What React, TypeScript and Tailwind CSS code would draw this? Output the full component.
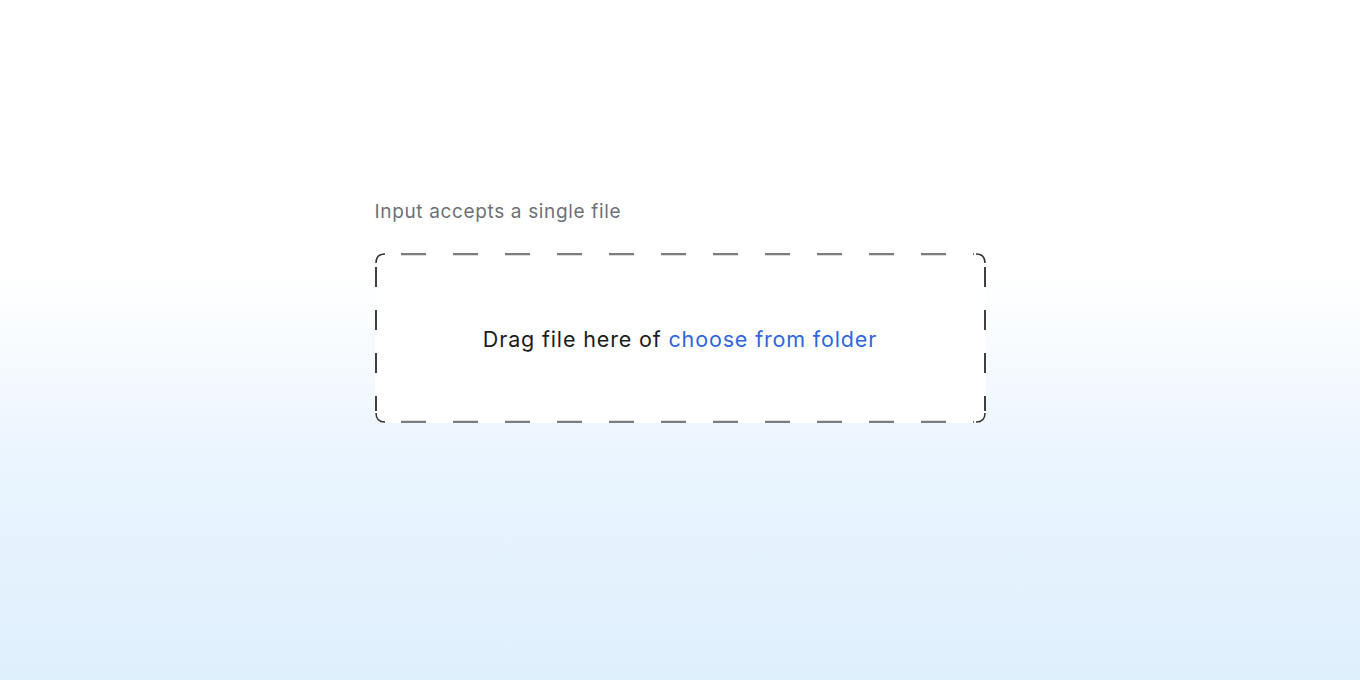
import React from "react";

const DropZone = () => {
  return (
    <div className="relative w-[611px] h-[170px] bg-white rounded-[12px] flex items-center justify-center">
      {/* dashed outline: long dashes need an svg, css dashed borders are too short */}
      <svg
        className="absolute inset-0 pointer-events-none"
        width="611"
        height="170"
        viewBox="0 0 611 170"
      >
        <line x1="12" y1="1" x2="599" y2="1" stroke="#7d7d7d" strokeWidth="2.4" strokeDasharray="25 27" strokeDashoffset="-14" />
        <line x1="12" y1="169" x2="599" y2="169" stroke="#7d7d7d" strokeWidth="2.4" strokeDasharray="25 27" strokeDashoffset="-14" />
        <line x1="1" y1="12" x2="1" y2="158" stroke="#111111" strokeWidth="1.6" strokeDasharray="20 23" strokeDashoffset="-2" />
        <line x1="610" y1="12" x2="610" y2="158" stroke="#111111" strokeWidth="1.6" strokeDasharray="20 23" strokeDashoffset="-2" />
        <path d="M1 10 Q1 1 10 1" fill="none" stroke="#333" strokeWidth="1.5" />
        <path d="M601 1 Q610 1 610 10" fill="none" stroke="#333" strokeWidth="1.5" />
        <path d="M1 160 Q1 169 10 169" fill="none" stroke="#333" strokeWidth="1.5" />
        <path d="M601 169 Q610 169 610 160" fill="none" stroke="#333" strokeWidth="1.5" />
      </svg>
      <p className="text-[21.5px] text-[#1c1c1c] tracking-[0.85px] leading-[28px] pt-[2px]">
        Drag file here of{" "}
        <span className="text-[#2f66e0] cursor-pointer">choose from folder</span>
      </p>
    </div>
  );
};

export default function App() {
  return (
    <div
      className="min-h-[680px] w-full flex justify-center pt-[198px] bg-[linear-gradient(to_bottom,#ffffff_0%,#ffffff_40%,#e9f4fe_70%,#dff0fd_100%)]"
      style={{ fontFamily: "Inter, 'Noto Sans', sans-serif" }}
    >
      <div className="flex flex-col gap-[27px]">
        <label className="text-[19px] text-[#6e7178] leading-[28px] tracking-[0.65px]">
          Input accepts a single file
        </label>
        <DropZone />
      </div>
    </div>
  );
}
